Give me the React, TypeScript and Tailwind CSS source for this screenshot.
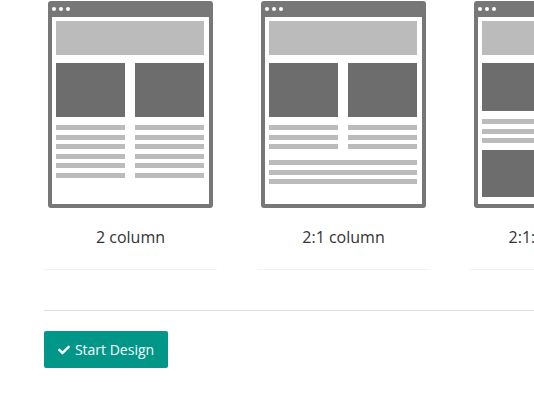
import { type JSX } from "react"
import { FaCheck } from "react-icons/fa"

function Line({ full }: { full?: boolean }): JSX.Element {
    return <div className={`h-[5px] bg-[#bbbbbb] ${full ? 'w-full' : ''}`} />
}

function Frame({ children }: { children: JSX.Element }): JSX.Element {
    return (
        <div className="w-[165px] h-[207px] bg-[#777777] rounded-[3px] px-1 pb-1 flex flex-col">
            <div className="h-4 flex items-center gap-[3px] pl-[0px]">
                <span className="w-[4px] h-[4px] rounded-full bg-white" />
                <span className="w-[4px] h-[4px] rounded-full bg-white" />
                <span className="w-[4px] h-[4px] rounded-full bg-white" />
            </div>
            <div className="flex-1 bg-white pt-1 pl-1 pr-[5px]">{children}</div>
        </div>
    )
}

function TwoColumn(): JSX.Element {
    return (
        <div>
            <div className="h-[34px] bg-[#bbbbbb]" />
            <div className="mt-2 flex gap-[10px]">
                {[0, 1].map((i) => (
                    <div key={i} className="flex-1">
                        <div className="h-[54px] bg-[#6d6d6d]" />
                        <div className="mt-2 flex flex-col gap-[4.5px]">
                            {[0, 1, 2, 3, 4, 5].map((j) => <Line key={j} />)}
                        </div>
                    </div>
                ))}
            </div>
        </div>
    )
}

function TwoOneColumn(): JSX.Element {
    return (
        <div>
            <div className="h-[34px] bg-[#bbbbbb]" />
            <div className="mt-2 flex gap-[10px]">
                {[0, 1].map((i) => (
                    <div key={i} className="flex-1">
                        <div className="h-[54px] bg-[#6d6d6d]" />
                        <div className="mt-2 flex flex-col gap-[4.5px]">
                            {[0, 1, 2].map((j) => <Line key={j} />)}
                        </div>
                    </div>
                ))}
            </div>
            <div className="mt-[11px] flex flex-col gap-[4.5px]">
                {[0, 1, 2].map((j) => <Line key={j} full />)}
            </div>
        </div>
    )
}

function TwoOneRow(): JSX.Element {
    return (
        <div>
            <div className="h-[34px] bg-[#bbbbbb]" />
            <div className="mt-2 h-[48px] bg-[#6d6d6d]" />
            <div className="mt-2 flex flex-col gap-[4.5px]">
                {[0, 1, 2].map((j) => <Line key={j} />)}
            </div>
            <div className="mt-[7px] h-[47px] bg-[#6d6d6d]" />
        </div>
    )
}

const layouts = [
    { label: '2 column', body: <TwoColumn /> },
    { label: '2:1 column', body: <TwoOneColumn /> },
    { label: '2:1:1 column', body: <TwoOneRow /> },
]

export default function App(): JSX.Element {
    return (
        <div className="w-[534px] h-[408px] overflow-hidden bg-white pl-[44px] font-['Open_Sans',sans-serif]">
            <div className="flex gap-[40px] pt-px">
                {layouts.map((l) => (
                    <div key={l.label} className="w-[173px] shrink-0 border-b border-[#f2f2f2]">
                        <div className="px-1">
                            <Frame>{l.body}</Frame>
                        </div>
                        <p className="mt-[17px] pb-5 text-center text-base leading-6 text-[#333333] whitespace-nowrap">{l.label}</p>
                    </div>
                ))}
            </div>
            <hr className="mt-10 border-0 border-t border-[#dddddd]" />
            <button className="mt-5 h-[37px] w-[124px] flex items-center justify-center gap-[5px] rounded-[2px] bg-[#009688] text-sm text-white">
                <FaCheck className="w-3 h-3" />
                Start Design
            </button>
        </div>
    )
}
